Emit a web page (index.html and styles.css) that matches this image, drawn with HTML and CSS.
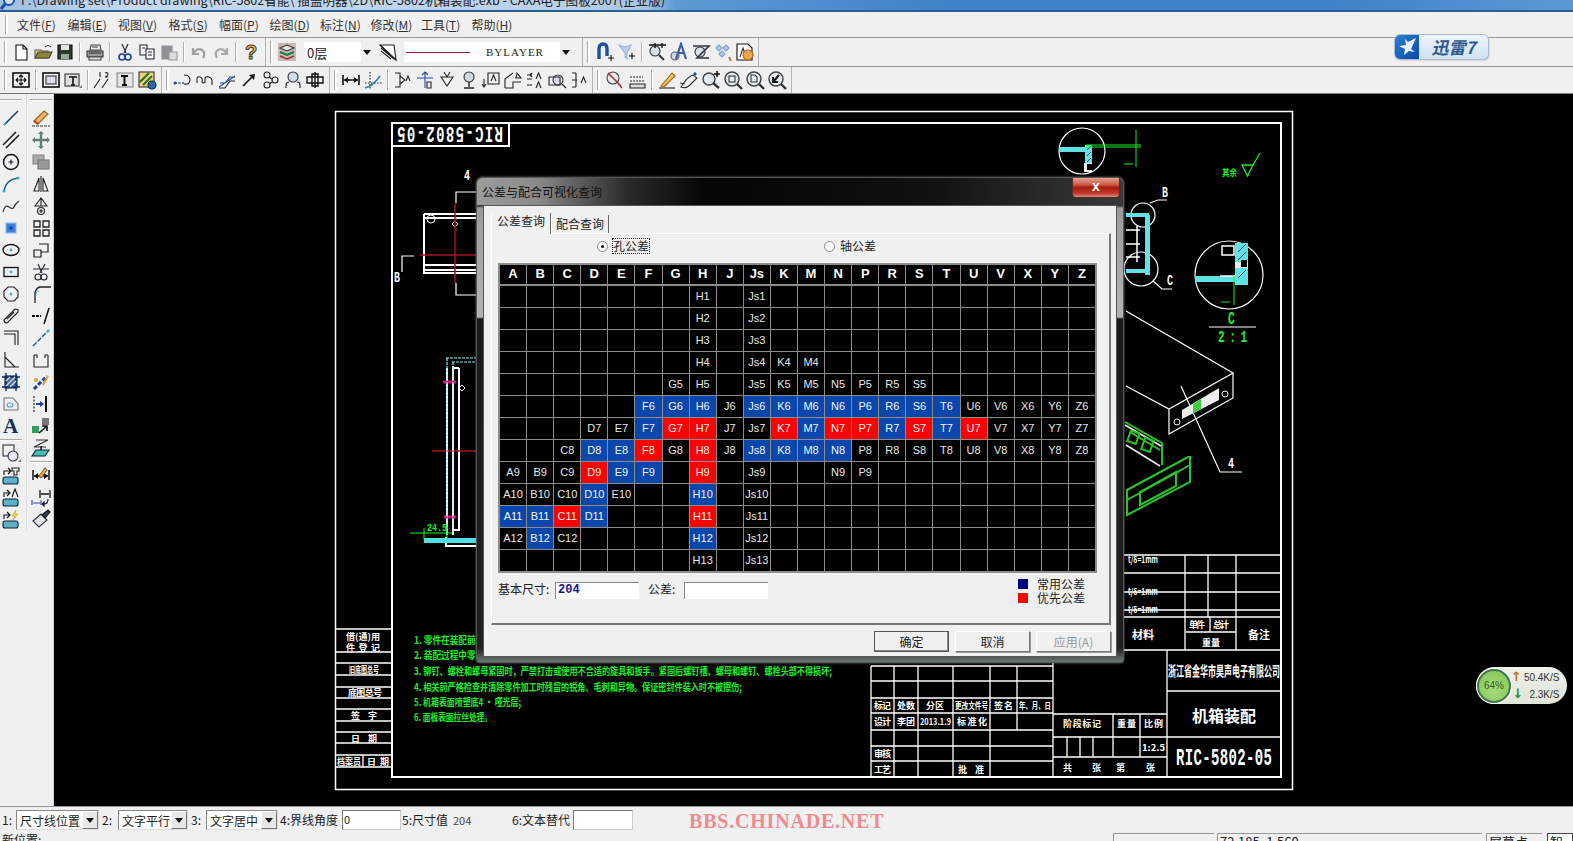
FILE: index.html
```html
<!DOCTYPE html>
<html lang="zh">
<head>
<meta charset="utf-8">
<title>CAXA电子图板2007</title>
<link rel="stylesheet" href="styles.css">
</head>
<body>
<div class="app">
  <div class="titlebar">
    <svg class="app-icon" viewBox="0 0 16 16"><circle cx="9" cy="5" r="5" fill="#cfe0f5" stroke="#1c4fa0" stroke-width="2"/><path d="M5 9L1 14" stroke="#1c4fa0" stroke-width="3"/></svg>
    <span class="title-text">F:\Drawing set\Product drawing\RIC-5802省能\ 插盖明器\2D\RIC-5802机箱装配.exb - CAXA电子图板2007(企业版)</span>
  </div>
  <div class="menubar">
    <span class="grip"></span>
    <span class="menu">文件(<u>F</u>)</span><span class="menu">编辑(<u>E</u>)</span><span class="menu">视图(<u>V</u>)</span><span class="menu">格式(<u>S</u>)</span><span class="menu">幅面(<u>P</u>)</span><span class="menu">绘图(<u>D</u>)</span><span class="menu">标注(<u>N</u>)</span><span class="menu">修改(<u>M</u>)</span><span class="menu">工具(<u>T</u>)</span><span class="menu">帮助(<u>H</u>)</span>
  </div>

  <div class="tb-row tb-row-1">
    <div class="tb-group g-std">
      <span class="grip"></span>
      <span class="btn"><svg class="ic" viewBox="0 0 20 20"><path d="M5 3h7l4 4v11H5z" fill="#fff" stroke="#111"/><path d="M12 3v4h4" stroke="#111"/></svg></span>
      <span class="btn"><svg class="ic" viewBox="0 0 20 20"><path d="M2 8h6l1 1h6v7H2z" fill="#e8dc8c" stroke="#555"/><path d="M2 16l3-6h14l-3 6z" fill="#8d8434" stroke="#444"/><path d="M12 5q3-3 6 0" stroke="#333"/></svg></span>
      <span class="btn"><svg class="ic" viewBox="0 0 20 20"><path d="M3 3h14v14H3z" fill="#2e3a2e" stroke="#111"/><path d="M6 3h8v5H6z" fill="#dfe5df" stroke="none"/><path d="M6 12h8v5H6z" fill="#9aa79a" stroke="none"/></svg></span>
      <span class="sep"></span>
      <span class="btn"><svg class="ic" viewBox="0 0 20 20"><path d="M6 3h9l1 5H5z" fill="#eee" stroke="#444"/><path d="M2 9h16v6H2z" fill="#999" stroke="#333"/><path d="M4 15h12v3H4z" fill="#ddd" stroke="#444"/><path d="M7 5h6M4 11h12" stroke="#333"/></svg></span>
      <span class="sep"></span>
      <span class="btn"><svg class="ic" viewBox="0 0 20 20"><path d="M7 2l4 9M13 2l-4 9" stroke="#223"/><circle cx="7" cy="15" r="3" stroke="#1c3fa0" stroke-width="1.6"/><circle cx="13" cy="15" r="3" stroke="#1c3fa0" stroke-width="1.6"/></svg></span>
      <span class="btn"><svg class="ic" viewBox="0 0 20 20"><path d="M3 3h7v10H3z" fill="#fff" stroke="#223"/><path d="M9 7h8v10H9z" fill="#fff" stroke="#223"/><path d="M11 10h4M11 13h4M5 6h3" stroke="#223"/></svg></span>
      <span class="btn"><svg class="ic" viewBox="0 0 20 20"><path d="M3 4h10v13H3z" fill="#8f9297" stroke="#8f9297"/><path d="M10 10h8v8h-8z" fill="#dcdcdc" stroke="#9a9a9a"/></svg></span>
      <span class="sep"></span>
      <span class="btn"><svg class="ic" viewBox="0 0 20 20"><path d="M4 6v6h6M4 12q4-7 9-4 4 3 1 8" stroke="#a0a0a0" stroke-width="2.2"/></svg></span>
      <span class="btn"><svg class="ic" viewBox="0 0 20 20"><path d="M16 6v6h-6M16 12q-4-7-9-4-4 3-1 8" stroke="#a8a8a8" stroke-width="2.2"/></svg></span>
      <span class="sep"></span>
      <span class="btn"><span class="help-mark">?</span></span>
    </div>
    <div class="tb-group g-layer">
      <span class="grip"></span>
      <span class="btn"><svg class="ic" viewBox="0 0 20 20"><rect x="1" y="1" width="18" height="18" fill="#c9b8b6" stroke="none"/><path d="M3 6l7-3 7 3-7 3z" fill="#e8e8d8" stroke="#333"/><path d="M3 10l7 3 7-3" stroke="#157f3d" stroke-width="2"/><path d="M3 14l7 3 7-3" stroke="#a03030" stroke-width="1.6"/></svg></span>
      <span class="combo combo-layer"><span class="combo-text">0层</span><span class="combo-arrow"></span></span>
      <span class="btn"><svg class="ic" viewBox="0 0 20 20"><path d="M2 3h14l2 15z" fill="#fff" stroke="#222"/><path d="M3 6l13 11M3 9l10 8M2 3l16 15" stroke="#222"/></svg></span>
      <span class="combo combo-line"><span class="red-line"></span><span class="combo-serif">BYLAYER</span><span class="combo-arrow"></span></span>
    </div>
    <div class="tb-group g-snap">
      <span class="grip grip-wide"></span>
      <span class="btn"><svg class="ic" viewBox="0 0 20 20"><path d="M4 17V7q0-5 4-5t4 5v7" stroke="#1f4f9f" stroke-width="3.4"/><path d="M16 13v6M13 16h6" stroke="#111"/></svg></span>
      <span class="btn"><svg class="ic" viewBox="0 0 20 20"><path d="M2 3l6 2 6-2-4 8v6l-2-2v-4z" fill="#bcd0ea" stroke="#9cb4d6"/><path d="M15 11v6M12 14h6" stroke="#111"/></svg></span>
      <span class="sep"></span>
      <span class="btn"><svg class="ic" viewBox="0 0 20 20"><circle cx="8" cy="9" r="5" fill="#d9e2e8" stroke="#333"/><path d="M12 13l5 5" stroke="#333" stroke-width="2"/><path d="M2 3h17M8 1v5M15 1v5" stroke="#111" stroke-width="1.4"/></svg></span>
      <span class="btn"><svg class="ic" viewBox="0 0 20 20"><circle cx="6" cy="14" r="4" fill="#cfd8df" stroke="#556"/><path d="M7 17L12 2l5 15M9 11h6" stroke="#3a5fa8" stroke-width="2.2"/></svg></span>
      <span class="btn"><svg class="ic" viewBox="0 0 20 20"><circle cx="9" cy="10" r="5" fill="#d9e2e8" stroke="#333"/><path d="M2 4h16L6 16h12" stroke="#334" stroke-width="1.6"/></svg></span>
      <span class="btn"><svg class="ic" viewBox="0 0 20 20"><path d="M3 6l3-3 3 3-3 3zM10 6l3-3 3 3-3 3zM6 12l3-3 3 3-3 3z" fill="#b9cde8" stroke="#7f9cc8"/><path d="M16 15l2 4" stroke="#c97a30" stroke-width="2"/></svg></span>
      <span class="btn"><svg class="ic" viewBox="0 0 20 20"><path d="M2 2h11l4 4v12H2z" fill="#fff" stroke="#111"/><path d="M5 15l3-9 3 9" stroke="#333"/><circle cx="13" cy="13" r="5" fill="#f1a24c" stroke="#a8621c"/></svg></span>
    </div>
  </div>

  <div class="tb-row tb-row-2">
    <div class="tb-group g-view">
      <span class="grip"></span>
      <span class="btn"><svg class="ic" viewBox="0 0 20 20"><rect x="2" y="3" width="16" height="14" fill="#f4f4f4" stroke="#111" stroke-width="1.6"/><path d="M10 5v10M5 10h10M8 7l2-2 2 2M8 13l2 2 2-2M7 8l-2 2 2 2M13 8l2 2-2 2" stroke="#111"/></svg></span>
      <span class="sep"></span>
      <span class="btn"><svg class="ic" viewBox="0 0 20 20"><rect x="2" y="3" width="16" height="14" stroke="#111" stroke-width="1.6"/><rect x="5" y="6" width="10" height="8" fill="#dde" stroke="#333"/></svg></span>
      <span class="btn"><svg class="ic" viewBox="0 0 20 20"><rect x="2" y="4" width="14" height="12" fill="#ddd" stroke="#333"/><path d="M6 7h8M10 7v8M8 15h4" stroke="#111" stroke-width="1.6"/><path d="M16 18h3v-3z" fill="#777" stroke="none"/></svg></span>
      <span class="sep"></span>
      <span class="btn"><svg class="ic" viewBox="0 0 20 20"><path d="M1 18L7 9M9 18l6-9M7 7V2M12 3q3-1 3 1t-3 3h3" stroke="#222"/></svg></span>
      <span class="btn"><svg class="ic" viewBox="0 0 20 20"><rect x="2" y="3" width="16" height="14" fill="#e4e4e4" stroke="#888"/><path d="M6 6h7M9.500 6v9M7 15h5" stroke="#111" stroke-width="2"/></svg></span>
      <span class="btn"><svg class="ic" viewBox="0 0 20 20"><rect x="2" y="2" width="15" height="15" fill="#e8d47a" stroke="#333"/><path d="M3 12L12 3M6 15l9-9" stroke="#2f6a2f" stroke-width="2"/><circle cx="15" cy="15" r="4" fill="#2c67b0" stroke="#123"/></svg></span>
    </div>
    <div class="tb-group g-curve">
      <span class="grip"></span>
      <span class="btn"><svg class="ic" viewBox="0 0 20 20"><path d="M2 13h10" stroke="#1c4fa0" stroke-dasharray="2 1.500" stroke-width="1.6"/><path d="M11 5q6 0 6 5t-6 4" stroke="#222"/><circle cx="2" cy="13" r="1.500" fill="#1c4fa0" stroke="none"/></svg></span>
      <span class="btn"><svg class="ic" viewBox="0 0 20 20"><path d="M2 13V9q0-3 3-2t2 5q1 2 3 0V8q1-2 4-1t3 4v4" stroke="#222"/></svg></span>
      <span class="btn"><svg class="ic" viewBox="0 0 20 20"><path d="M2 17l16-11M3 13h5l5-6h5" stroke="#1c4fa0"/><path d="M2 18h6l5-7h5" stroke="#222"/></svg></span>
      <span class="btn"><svg class="ic" viewBox="0 0 20 20"><path d="M4 16L14 6" stroke="#111" stroke-width="1.6"/><path d="M16 4l-6 1 5 5z" fill="#111" stroke="none"/></svg></span>
      <span class="btn"><svg class="ic" viewBox="0 0 20 20"><circle cx="6" cy="5" r="3" stroke="#222"/><circle cx="14" cy="10" r="3" stroke="#222"/><circle cx="6" cy="15" r="3" stroke="#222"/><path d="M8 7l3 2M8 14l3-2" stroke="#222"/></svg></span>
      <span class="btn"><svg class="ic" viewBox="0 0 20 20"><circle cx="10" cy="7" r="5" fill="#cfe0e8" stroke="#334"/><path d="M3 18v-3q0-3 3-3M17 18v-3q0-3-3-3" stroke="#222"/></svg></span>
      <span class="btn"><svg class="ic" viewBox="0 0 20 20"><path d="M7 4h6v12H7zM2 7h16v6H2zM10 2v16" stroke="#111" stroke-width="1.4"/></svg></span>
    </div>
    <div class="tb-group g-dim">
      <span class="grip"></span>
      <span class="btn"><svg class="ic" viewBox="0 0 20 20"><path d="M2 5v10M18 5v10M3 10h14" stroke="#111" stroke-width="1.6"/><path d="M3 10l4-3v6zM17 10l-4-3v6z" fill="#111" stroke="none"/></svg></span>
      <span class="btn"><svg class="ic" viewBox="0 0 20 20"><path d="M2 18q8-2 15-12" stroke="#1c7fb0" stroke-width="1.4"/><path d="M7 2v17M2 13h17" stroke="#222" stroke-dasharray="1.500 1.500"/></svg></span>
      <span class="sep"></span>
      <span class="btn"><svg class="ic" viewBox="0 0 20 20"><path d="M2 3h5v14H2M7 6l5 4-5 4" stroke="#222"/><path d="M13 11l2-5 2 5" stroke="#222"/></svg></span>
      <span class="btn"><svg class="ic" viewBox="0 0 20 20"><path d="M2 8h16M10 2v16M7 5l3-3 3 3" stroke="#1c4fa0"/><path d="M12 12h4v6h-4z" stroke="#222"/></svg></span>
      <span class="btn"><svg class="ic" viewBox="0 0 20 20"><path d="M4 7h12l-6 9zM7 2l3 5 3-5" stroke="#222"/></svg></span>
      <span class="btn"><svg class="ic" viewBox="0 0 20 20"><circle cx="10" cy="7" r="5" fill="#cfd9df" stroke="#333"/><path d="M10 12v5M5 18h10" stroke="#222" stroke-width="1.4"/></svg></span>
      <span class="btn"><svg class="ic" viewBox="0 0 20 20"><path d="M7 3h11v11H7zM3 9v8M1 14l2 3 2-3" stroke="#222"/><path d="M10 11l2.500-6 2.500 6" stroke="#222"/></svg></span>
      <span class="btn"><svg class="ic" viewBox="0 0 20 20"><path d="M2 18V9l8-6M2 18h8v-6h8M14 3l4 5h-5z" stroke="#222"/></svg></span>
      <span class="btn"><svg class="ic" viewBox="0 0 20 20"><path d="M2 5h5M2 9h5M2 15h5M7 3l-2 2 2 2" stroke="#222"/><path d="M11 9l2.500-6 2.500 6M11 18l2.500-6 2.500 6" stroke="#222"/></svg></span>
      <span class="btn"><svg class="ic" viewBox="0 0 20 20"><circle cx="11" cy="10" r="5" fill="#dde" stroke="#333"/><path d="M2 7h11v8H2zM15 14l4 4" stroke="#222"/></svg></span>
      <span class="btn"><svg class="ic" viewBox="0 0 20 20"><path d="M3 3h4M7 3v14M3 17h4M3 10h5M12 13l2.500-6 2.500 6" stroke="#222"/></svg></span>
    </div>
    <div class="tb-group g-zoom">
      <span class="grip grip-wide"></span>
      <span class="btn"><svg class="ic" viewBox="0 0 20 20"><circle cx="8" cy="8" r="6" fill="#e4ecef" stroke="#444"/><path d="M3 3l13 13M12 12l5 6" stroke="#a33" stroke-width="1.500"/></svg></span>
      <span class="btn"><svg class="ic" viewBox="0 0 20 20"><path d="M3 7h13M3 11h15M3 16h15" stroke="#222" stroke-dasharray="2 1"/><path d="M3 14h15v4H3z" fill="#ddd" stroke="#222"/></svg></span>
      <span class="sep"></span>
      <span class="btn"><svg class="ic" viewBox="0 0 20 20"><path d="M2 18h16" stroke="#222"/><path d="M4 16L15 3l3 3L7 17z" fill="#f1c05a" stroke="#9a6a18"/></svg></span>
      <span class="btn"><svg class="ic" viewBox="0 0 20 20"><path d="M2 17q6-10 12-12l4 3-7 7q-4 4-9 2zM1 13l5 1" fill="#f2f2f2" stroke="#333"/><path d="M16 2l2 2-2 2-2-2z" fill="#1c4fa0" stroke="none"/></svg></span>
      <span class="btn"><svg class="ic" viewBox="0 0 20 20"><circle cx="8" cy="9" r="6" fill="#e3ecf0" stroke="#444" stroke-width="1.500"/><path d="M12 13l6 5" stroke="#333" stroke-width="2.400"/><path d="M13 4h6M16 1v6" stroke="#111" stroke-width="1.600"/></svg></span>
      <span class="btn"><svg class="ic" viewBox="0 0 20 20"><circle cx="9" cy="9" r="7" fill="#e3ecf0" stroke="#444" stroke-width="1.500"/><path d="M14 14l5 5" stroke="#333" stroke-width="2.400"/><rect x="6" y="6" width="6" height="6" stroke="#333"/></svg></span>
      <span class="btn"><svg class="ic" viewBox="0 0 20 20"><circle cx="9" cy="9" r="7" fill="#e3ecf0" stroke="#444" stroke-width="1.500"/><path d="M14 14l5 5" stroke="#333" stroke-width="2.400"/><path d="M6 5h4l2 2v5H6z" stroke="#333"/></svg></span>
      <span class="btn"><svg class="ic" viewBox="0 0 20 20"><circle cx="9" cy="9" r="7" fill="#e3ecf0" stroke="#444" stroke-width="1.500"/><path d="M14 14l5 5" stroke="#333" stroke-width="2.400"/><path d="M12 5l-6 7M6 7v5h5" stroke="#111" stroke-width="2"/></svg></span>
    </div>
  </div>

  <div class="main">
    <aside class="side">
      <div class="side-col side-col-a">
        <span class="side-grip"></span>
        <span class="sbtn"><svg class="ic" viewBox="0 0 20 20"><path d="M3 17L17 3" stroke="#1c3f5f" stroke-width="1.600"/><path d="M3 17l2-2" stroke="#3ab0d0" stroke-width="2.400"/></svg></span>
        <span class="sbtn"><svg class="ic" viewBox="0 0 20 20"><path d="M2 15L15 2M5 18L18 5" stroke="#222" stroke-width="1.600"/></svg></span>
        <span class="sbtn"><svg class="ic" viewBox="0 0 20 20"><circle cx="10" cy="10" r="7.500" stroke="#111" stroke-width="1.400"/><path d="M7.500 10h5M10 7.500v5" stroke="#123" stroke-width="1.200"/></svg></span>
        <span class="sbtn"><svg class="ic" viewBox="0 0 20 20"><path d="M3 18Q4 6 17 4" stroke="#1f5f7f" stroke-width="1.500"/><circle cx="3" cy="17" r="1.600" fill="#3ab0d0" stroke="none"/><circle cx="17" cy="4" r="1.600" fill="#3ab0d0" stroke="none"/></svg></span>
        <span class="sbtn"><svg class="ic" viewBox="0 0 20 20"><path d="M2 16q2-8 6-5t5 0 5-6" stroke="#333" stroke-width="1.200"/></svg></span>
        <span class="sbtn"><svg class="ic" viewBox="0 0 20 20"><rect x="5" y="5" width="10" height="10" fill="#3b7fd8" stroke="#8fbdf0"/><path d="M10 8l2 2-2 2-2-2z" fill="#0c3f98" stroke="none"/></svg></span>
        <span class="sbtn"><svg class="ic" viewBox="0 0 20 20"><ellipse cx="10" cy="10" rx="8" ry="5.500" stroke="#111" stroke-width="1.300"/><circle cx="10" cy="10" r="1.400" fill="#4fa8d8" stroke="none"/></svg></span>
        <span class="sbtn"><svg class="ic" viewBox="0 0 20 20"><rect x="3" y="5.500" width="14" height="9" stroke="#111" stroke-width="1.300"/><circle cx="10" cy="10" r="1.400" fill="#4fa8d8" stroke="none"/></svg></span>
        <span class="sbtn"><svg class="ic" viewBox="0 0 20 20"><path d="M7 3h6l4 4v6l-4 4H7l-4-4V7z" stroke="#223"/><circle cx="10" cy="10" r="1.400" fill="#4fa8d8" stroke="none"/></svg></span>
        <span class="sbtn"><svg class="ic" viewBox="0 0 20 20"><path d="M3 14L14 3q4 0 3 3L6 17q-3 0-3-3zM6 13L13 6" stroke="#222"/></svg></span>
        <span class="sbtn"><svg class="ic" viewBox="0 0 20 20"><path d="M3 3h14v14M3 6h11v11" stroke="#222"/></svg></span>
        <span class="sbtn"><svg class="ic" viewBox="0 0 20 20"><path d="M4 2v15h14M4 7l10 10" stroke="#222"/></svg></span>
        <span class="sbtn"><svg class="ic" viewBox="0 0 20 20"><rect x="4" y="4" width="12" height="12" fill="#4a6f8f" stroke="#123"/><path d="M1 5h18M1 15h18M5 1v18M15 1v18" stroke="#0c2f5f" stroke-width="1.400"/><path d="M5 9l4-4M5 14l9-9M9 15l6-6" stroke="#dde"/></svg></span>
        <span class="sbtn"><svg class="ic" viewBox="0 0 20 20"><path d="M3 4h9l5 6v6H3z" stroke="#777"/><ellipse cx="9" cy="11" rx="3" ry="2" stroke="#4fa8d8"/></svg></span>
        <span class="sbtn"><span class="a-mark">A</span></span>
        <span class="side-sep"></span>
        <span class="sbtn"><svg class="ic" viewBox="0 0 20 20"><rect x="2" y="2" width="11" height="11" stroke="#333"/><circle cx="12" cy="13" r="5" fill="#e8eef4" stroke="#334"/><path d="M17 19h3v-3z" fill="#777" stroke="none"/></svg></span>
        <span class="sbtn"><svg class="ic" viewBox="0 0 20 20"><rect x="2" y="12" width="15" height="7" rx="2" fill="#5fb0c8" stroke="#123"/><path d="M3 10V6h6M7 3l3 3-3 3" stroke="#111"/><path d="M11 3h7v3h-2v4h-3V6h-2z" stroke="#222"/></svg></span>
        <span class="sbtn"><svg class="ic" viewBox="0 0 20 20"><rect x="2" y="12" width="15" height="7" rx="2" fill="#5fb0c8" stroke="#123"/><path d="M3 10V6h5M6 3l3 3-3 3M11 10l3-8 3 8" stroke="#111"/></svg></span>
        <span class="sbtn"><svg class="ic" viewBox="0 0 20 20"><rect x="2" y="12" width="15" height="7" rx="2" fill="#5fb0c8" stroke="#123"/><path d="M3 10V6h5M6 3l3 3-3 3" stroke="#111"/><path d="M15 1l-4 6h3l-2 4 5-6h-3z" fill="#f2e040" stroke="#b8a010" stroke-width=".6"/></svg></span>
      </div>
      <div class="side-col">
        <span class="side-grip"></span>
        <span class="sbtn"><svg class="ic" viewBox="0 0 20 20"><path d="M3 13L13 3l4 3L7 16z" fill="#ecb45e" stroke="#8a6a20"/><path d="M3 13l4 3" stroke="#c03030" stroke-width="2"/><path d="M1 18h18" stroke="#333" stroke-dasharray="3 1"/></svg></span>
        <span class="sbtn"><svg class="ic" viewBox="0 0 20 20"><path d="M10 2v16M2 10h16" stroke="#5f7f77" stroke-width="2.400"/><path d="M10 1l3 3H7zM10 19l3-3H7zM1 10l3-3v6zM19 10l-3-3v6z" fill="#5f7f77" stroke="none"/></svg></span>
        <span class="sbtn"><svg class="ic" viewBox="0 0 20 20"><rect x="2" y="3" width="11" height="9" fill="#aaa" stroke="#888"/><rect x="7" y="8" width="11" height="9" fill="#999" stroke="#777"/></svg></span>
        <span class="sbtn"><svg class="ic" viewBox="0 0 20 20"><path d="M8 4v13H3zM12 4v13h5zM10 2v16" stroke="#222"/></svg></span>
        <span class="sbtn"><svg class="ic" viewBox="0 0 20 20"><path d="M10 2l-6 8h12zM10 2v8" stroke="#222"/><circle cx="10" cy="15" r="3.500" stroke="#222"/><path d="M10 13v4M8 15h4" stroke="#222"/></svg></span>
        <span class="sbtn"><svg class="ic" viewBox="0 0 20 20"><path d="M3 3h6v6H3zM12 3h6v6h-6zM3 12h6v6H3zM12 12h6v6h-6z" stroke="#222" stroke-width="1.300"/></svg></span>
        <span class="sbtn"><svg class="ic" viewBox="0 0 20 20"><path d="M3 10h7v7H3zM8 4h9v8h-7" stroke="#222" stroke-width="1.200"/></svg></span>
        <span class="sbtn"><svg class="ic" viewBox="0 0 20 20"><path d="M7 2l4 9M14 2l-5 9M2 7h16" stroke="#223"/><circle cx="7" cy="15" r="3" stroke="#223"/><circle cx="13" cy="15" r="3" stroke="#223"/></svg></span>
        <span class="sbtn"><svg class="ic" viewBox="0 0 20 20"><path d="M4 19V8M8 3h12M4 9Q5 4 9 3" stroke="#222" stroke-width="1.300"/><path d="M8 7q-3 1-3 5" stroke="#4fa8d8" stroke-dasharray="1.500 1"/></svg></span>
        <span class="sbtn"><svg class="ic" viewBox="0 0 20 20"><path d="M1 10h9" stroke="#111" stroke-width="2" stroke-dasharray="3 1"/><path d="M13 18L18 2" stroke="#111" stroke-width="1.500"/></svg></span>
        <span class="sbtn"><svg class="ic" viewBox="0 0 20 20"><path d="M2 18L18 2" stroke="#1c5f7f" stroke-width="1.400" stroke-dasharray="5 1.500"/><circle cx="17" cy="3" r="1.500" fill="#3ab0d0" stroke="none"/></svg></span>
        <span class="sbtn"><svg class="ic" viewBox="0 0 20 20"><path d="M3 5v12h14V5M3 5h3v3M17 5h-3v3" stroke="#222"/></svg></span>
        <span class="sbtn"><svg class="ic" viewBox="0 0 20 20"><path d="M3 17L16 4" stroke="#1c3f9f" stroke-width="3" stroke-dasharray="4 2"/><path d="M12 13l5-9" stroke="#e8a030" stroke-width="2"/><circle cx="5" cy="8" r="2" fill="#e8a030" stroke="none"/></svg></span>
        <span class="sbtn"><svg class="ic" viewBox="0 0 20 20"><path d="M3 2v16" stroke="#111" stroke-dasharray="2 1.500"/><path d="M15 2v16" stroke="#111" stroke-width="2"/><path d="M5 10h7" stroke="#1c3fa0" stroke-width="2"/><path d="M13 10l-4-3v6z" fill="#1c3fa0" stroke="none"/></svg></span>
        <span class="sbtn"><svg class="ic" viewBox="0 0 20 20"><rect x="1" y="10" width="7" height="7" fill="#2f9f5f" stroke="none"/><rect x="11" y="2" width="7" height="7" fill="#777" stroke="none"/><path d="M8 17l8-7M11 10h5v5" stroke="#111" stroke-width="1.600"/></svg></span>
        <span class="sbtn"><svg class="ic" viewBox="0 0 20 20"><path d="M5 2h12L3 9h12" stroke="#333"/><path d="M5 12h13l-4 6H1z" fill="#3fc0b8" stroke="#123"/><path d="M10 8v4" stroke="#111" stroke-width="1.500"/></svg></span>
        <span class="side-sep"></span>
        <span class="sbtn"><svg class="ic" viewBox="0 0 20 20"><path d="M2 5v10M18 5v10M3 11h14" stroke="#111" stroke-width="1.500"/><path d="M3 11l4-3v6zM17 11l-4-3v6z" fill="#111" stroke="none"/><path d="M8 11l6-8 2 2-6 8z" fill="#ecb45e" stroke="#8a6a20"/></svg></span>
        <span class="sbtn"><svg class="ic" viewBox="0 0 20 20"><path d="M9 3v8M19 3v8M10 7h8" stroke="#111" stroke-width="1.300"/><path d="M1 13v5M10 13v5M2 16h7" stroke="#1c4fa0"/><path d="M17 12q0 5-4 5M13 15v4l-2-2z" stroke="#111"/></svg></span>
        <span class="sbtn"><svg class="ic" viewBox="0 0 20 20"><path d="M2 12L10 5l6 6-8 7z" fill="#dfe3e8" stroke="#333"/><path d="M11 6l6-5 2 2-5 6z" fill="#33405a" stroke="#111"/></svg></span>
      </div>
    </aside>

    <div class="canvas">
      <svg class="drawing" viewBox="54 94 1519 712" width="1519" height="712">
        <g class="w" stroke-width="1.500">
          <rect x="335.500" y="111.500" width="957" height="678"/>
        </g>
        <g class="w" stroke-width="2">
          <path d="M392 123H1281V777H392zM392 146H509V123"/>
          <path d="M424 214H476M424 218H476M424 214V273H476M424 265H476M424 270H476"/>
          <path d="M447 368V535M453 366V535M459 368V530H452M453 368H459"/>
          <path d="M446 537V546H476"/>
        </g>
        <g class="w" stroke-width="1.200">
          <path d="M456 203V192H476M456 283V295H476M402 272V256H414"/>
        </g>
        <g class="w" stroke-width="1">
          <circle cx="431" cy="219" r="4"/>
          <path d="M452 224l3-3 3 3-3 3z"/>
          <path d="M459 388l3-3 3 3-3 3z"/>
        </g>
        <path d="M420 255H476M455 203V283M432 451H476" stroke="#a01525" stroke-width="1.500" fill="none"/>
        <path d="M443 382H456M444 517H456" stroke="#e0107a" stroke-width="3" fill="none"/>
        <path d="M446 358H476M452 362H476M447 358V535M453 362V535" stroke="#8fe8e8" stroke-width="1.200" fill="none" stroke-dasharray="3 1"/>
        <rect x="424" y="538" width="52" height="5" fill="#4fe0e8"/>
        <path d="M410 533H452M424 528V540M447 525V540" stroke="#1aee22" fill="none"/>
        <text class="gtxt" transform="translate(427 531) scale(1 1.400)" textLength="20" lengthAdjust="spacingAndGlyphs">24.5</text>
        <text class="wtxt wtxt-sm" transform="translate(394 282) scale(1 1.500)">B</text>
        <text class="wtxt wtxt-sm" transform="translate(464 180) scale(1 1.500)">4</text>
        <text class="wtxt wtxt-tall" transform="translate(503 127) rotate(180) scale(1 1.600)" textLength="106" lengthAdjust="spacing">RIC-5802-05</text>

        <g class="w" stroke-width="1.200">
          <circle cx="1082" cy="151" r="23"/>
          <circle cx="1143" cy="215" r="12"/>
          <circle cx="1141" cy="269" r="17"/>
          <circle cx="1229" cy="275" r="34"/>
          <path d="M1150 203L1158 200H1167M1153 281L1162 289H1172"/>
          <path d="M1126 311L1233 373L1169 409L1126 386M1233 373V398L1169 434V409"/>
          <path d="M1181 386L1220 472H1242"/>
        </g>
        <path d="M1059 147H1086V152H1059zM1085 145H1092V163H1085zM1126 213H1149V217H1126zM1145 215H1150V275H1145zM1126 269H1146V273H1126zM1235 243H1248V262H1235zM1235 268H1248V285H1235zM1195 276H1240V282H1195z" fill="#63e2e6"/>
        <path d="M1087 150L1091 146M1087 156L1091 152M1087 162L1091 158M1238 252L1246 244M1238 260L1246 252M1238 278L1246 270" stroke="#157" stroke-width="1" fill="none"/>
        <path d="M1084 163H1092V172H1084zM1235 262H1248V268H1235z" fill="#eee"/>
        <rect x="1087" y="164" width="6" height="6" fill="#000"/>
        <rect x="1241" y="260" width="6" height="7" fill="#000"/>
        <g class="w" stroke-width="1.500">
          <path d="M1222 246H1234V255H1222zM1220 276H1235"/>
          <path d="M1126 230H1140M1126 244H1140M1126 257H1140M1137 226V262"/>
        </g>
        <path d="M1086 145H1141M1086 147H1141M1136 130V167M1124 164H1133M1234 275V305M1221 302H1230" stroke="#1aee22" fill="none"/>
        <path d="M1242 165H1253L1247.500 176zM1253 165L1260 153" stroke="#1aee22" stroke-width="1.300" fill="none"/>
        <path d="M1209 327H1256" stroke="#fff" fill="none"/>
        <text class="gtxt gtxt-tall" transform="translate(1228 324) scale(1 1.600)">C</text>
        <text class="gtxt gtxt-tall" transform="translate(1218 342) scale(1 1.500)" textLength="29" lengthAdjust="spacing">2 : 1</text>
        <text class="gtxt gtxt-cn" x="1222" y="176" textLength="15" lengthAdjust="spacingAndGlyphs">其余</text>
        <text class="wtxt wtxt-sm" transform="translate(1162 197) scale(1 1.500)">B</text>
        <text class="wtxt wtxt-sm" transform="translate(1167 285) scale(1 1.500)">C</text>
        <text class="wtxt wtxt-sm" transform="translate(1228 468) scale(1 1.500)">4</text>

        <path d="M1182 410L1219 388V400L1182 419z" fill="#eee"/>
        <path d="M1193 404L1201 399V409L1193 414z" fill="#3fce3f"/>
        <g class="w" stroke-width="1"><circle cx="1177" cy="422" r="3"/><circle cx="1225" cy="394" r="3"/></g>
        <path d="M1125 422L1162 443V465M1130 432L1160 450M1127 490L1188 457H1190V482L1127 515zM1140 492L1176 472V486L1140 505zM1127 500L1190 465" stroke="#2ac42a" stroke-width="2" fill="none"/>
        <path d="M1125 425L1161 446M1126 445L1160 466" stroke="#eee" stroke-width="1.500" fill="none"/>
        <rect x="1129" y="432" width="9" height="11" stroke="#2ac42a" stroke-width="2" fill="none" transform="rotate(20 1134 437)"/>
        <rect x="1143" y="439" width="9" height="12" stroke="#2ac42a" stroke-width="2" fill="none" transform="rotate(20 1148 445)"/>

        <g class="w" stroke-width="1.300">
          <path d="M1124 555H1281M1124 573H1281M1124 592H1281M1124 610H1281M1124 617H1281M1185 555V650M1208 555V617M1236 555V650M1186 632H1236M1210 617V632M1124 650H1281"/>
          <path d="M1167 650V777M1167 691H1281M1167 737H1281"/>
          <path d="M1053 650V777M1053 714H1167M1053 737H1167M1053 757H1167M1113 714V757M1140 714V757M1067 737V757M1080 737V757M1093 737V757"/>
          <path d="M871 666V777H1053M871 666H1053M871 681H1053M871 698H1053M871 713H1053M871 730H1053M871 746H1053M871 761H1053M894 666V777M918 666V777M953 666V777M990 666V777M1017 666V730"/>
          <path d="M335 629H392M335 652H392M335 663H392M335 675H392M335 687H392M335 698H392M335 709H392M335 721H392M335 732H392M335 743H392M335 755H392M335 767H392M363 755V767"/>
        </g>
        <g class="wtxt wtxt-block">
          <text x="1128" y="563" textLength="30" lengthAdjust="spacingAndGlyphs">t/δ=1mm</text><text x="1128" y="595" textLength="30" lengthAdjust="spacingAndGlyphs">t/δ=1mm</text><text x="1128" y="613" textLength="30" lengthAdjust="spacingAndGlyphs">t/δ=1mm</text>
          <text x="1189" y="628" textLength="16">单件</text><text x="1213" y="628" textLength="16">总计</text><text x="1202" y="646" textLength="18">重量</text>
        </g>
        <text class="wtxt wtxt-mid" x="1132" y="639" textLength="22">材料</text>
        <text class="wtxt wtxt-mid" x="1248" y="639" textLength="22">备注</text>
        <text class="wtxt wtxt-co" x="1168" y="676" textLength="112" lengthAdjust="spacingAndGlyphs">浙江省金华市昊声电子有限公司</text>
        <text class="wtxt wtxt-name" x="1192" y="722" textLength="64">机箱装配</text>
        <text class="wtxt wtxt-tall" transform="translate(1176 765) scale(1 1.700)" textLength="96" lengthAdjust="spacing">RIC-5802-05</text>
        <g class="wtxt wtxt-block">
          <text x="1063" y="727" textLength="38">阶段标记</text><text x="1117" y="727" textLength="19">重量</text><text x="1144" y="727" textLength="19">比例</text>
          <text x="1142" y="751" textLength="23" lengthAdjust="spacingAndGlyphs">1:2.5</text>
          <text x="1063" y="771">共</text><text x="1092" y="771">张</text><text x="1116" y="771">第</text><text x="1146" y="771">张</text>
          <text x="874" y="709" textLength="17">标记</text><text x="897" y="709" textLength="18">处数</text><text x="926" y="709" textLength="18">分区</text><text x="955" y="709" textLength="33" lengthAdjust="spacingAndGlyphs">更改文件号</text><text x="994" y="709" textLength="19">签名</text><text x="1019" y="709" textLength="32" lengthAdjust="spacingAndGlyphs">年、月、日</text>
          <text x="874" y="725" textLength="17">设计</text><text x="897" y="725" textLength="18">李团</text><text x="920" y="725" textLength="31" lengthAdjust="spacingAndGlyphs">2013.1.9</text><text x="957" y="725" textLength="30">标准化</text>
          <text x="874" y="757" textLength="17">审核</text><text x="874" y="773" textLength="17">工艺</text><text x="958" y="773" textLength="26">批准</text>
          <text x="346" y="640" textLength="34" lengthAdjust="spacingAndGlyphs">借(通)用</text><text x="346" y="651" textLength="34">件登记</text>
          <text x="349" y="673" textLength="30" lengthAdjust="spacingAndGlyphs">旧底图总号</text><text x="348" y="696" textLength="34">底图总号</text>
          <text x="351" y="719" textLength="26">签字</text><text x="351" y="742" textLength="26">日期</text>
          <text x="337" y="765" textLength="24" lengthAdjust="spacingAndGlyphs">档案员</text><text x="367" y="765" textLength="22">日期</text>
        </g>
        <g class="gtxt gtxt-note">
          <text x="414" y="644" textLength="122" lengthAdjust="spacingAndGlyphs">1. 零件在装配前必须清除干净，</text>
          <text x="414" y="659" textLength="122" lengthAdjust="spacingAndGlyphs">2. 装配过程中零件不允许磕碰、</text>
          <text x="414" y="675" textLength="418" lengthAdjust="spacingAndGlyphs">3. 铆钉、螺栓和螺母紧固时，严禁打击或使用不合适的旋具和扳手。紧固后螺钉槽、螺母和螺钉、螺栓头部不得损坏;</text>
          <text x="414" y="691" textLength="328" lengthAdjust="spacingAndGlyphs">4. 相关前严格检查并清除零件加工时残留的锐角、毛刺和异物。保证密封件装入时不被擦伤;</text>
          <text x="414" y="706" textLength="107" lengthAdjust="spacingAndGlyphs">5. 机箱表面喷塑底4 · 哑光层;</text>
          <text x="414" y="721" textLength="78" lengthAdjust="spacingAndGlyphs">6. 面板表面拉丝处理。</text>
        </g>
      </svg>

      <section class="dlg">
        <header class="dlg-title"><span>公差与配合可视化查询</span><span class="dlg-close">x</span></header>
        <div class="dlg-body">
          <div class="tabs"><span class="tab tab-on">公差查询</span><span class="tab">配合查询</span></div>
          <div class="panel">
            <div class="radios">
              <label class="radio radio-a"><i class="dot dot-on"></i><span class="focus">孔公差</span></label>
              <label class="radio radio-b"><i class="dot"></i><span>轴公差</span></label>
            </div>
            <div class="tol">
              <div class="tol-head"><span>A</span><span>B</span><span>C</span><span>D</span><span>E</span><span>F</span><span>G</span><span>H</span><span>J</span><span>Js</span><span>K</span><span>M</span><span>N</span><span>P</span><span>R</span><span>S</span><span>T</span><span>U</span><span>V</span><span>X</span><span>Y</span><span>Z</span></div>
              <div class="tol-body">
                <span></span><span></span><span></span><span></span><span></span><span></span><span></span><span>H1</span><span></span><span>Js1</span><span></span><span></span><span></span><span></span><span></span><span></span><span></span><span></span><span></span><span></span><span></span><span></span>
                <span></span><span></span><span></span><span></span><span></span><span></span><span></span><span>H2</span><span></span><span>Js2</span><span></span><span></span><span></span><span></span><span></span><span></span><span></span><span></span><span></span><span></span><span></span><span></span>
                <span></span><span></span><span></span><span></span><span></span><span></span><span></span><span>H3</span><span></span><span>Js3</span><span></span><span></span><span></span><span></span><span></span><span></span><span></span><span></span><span></span><span></span><span></span><span></span>
                <span></span><span></span><span></span><span></span><span></span><span></span><span></span><span>H4</span><span></span><span>Js4</span><span>K4</span><span>M4</span><span></span><span></span><span></span><span></span><span></span><span></span><span></span><span></span><span></span><span></span>
                <span></span><span></span><span></span><span></span><span></span><span></span><span>G5</span><span>H5</span><span></span><span>Js5</span><span>K5</span><span>M5</span><span>N5</span><span>P5</span><span>R5</span><span>S5</span><span></span><span></span><span></span><span></span><span></span><span></span>
                <span></span><span></span><span></span><span></span><span></span><span class="b">F6</span><span class="b">G6</span><span class="b">H6</span><span>J6</span><span class="b">Js6</span><span class="b">K6</span><span class="b">M6</span><span class="b">N6</span><span class="b">P6</span><span class="b">R6</span><span class="b">S6</span><span class="b">T6</span><span>U6</span><span>V6</span><span>X6</span><span>Y6</span><span>Z6</span>
                <span></span><span></span><span></span><span>D7</span><span>E7</span><span class="b">F7</span><span class="r">G7</span><span class="r">H7</span><span>J7</span><span>Js7</span><span class="r">K7</span><span class="b">M7</span><span class="r">N7</span><span class="r">P7</span><span class="b">R7</span><span class="r">S7</span><span class="b">T7</span><span class="r">U7</span><span>V7</span><span>X7</span><span>Y7</span><span>Z7</span>
                <span></span><span></span><span>C8</span><span class="b">D8</span><span class="b">E8</span><span class="r">F8</span><span>G8</span><span class="r">H8</span><span>J8</span><span class="b">Js8</span><span class="b">K8</span><span class="b">M8</span><span class="b">N8</span><span>P8</span><span>R8</span><span>S8</span><span>T8</span><span>U8</span><span>V8</span><span>X8</span><span>Y8</span><span>Z8</span>
                <span>A9</span><span>B9</span><span>C9</span><span class="r">D9</span><span class="b">E9</span><span class="b">F9</span><span></span><span class="r">H9</span><span></span><span>Js9</span><span></span><span></span><span>N9</span><span>P9</span><span></span><span></span><span></span><span></span><span></span><span></span><span></span><span></span>
                <span>A10</span><span>B10</span><span>C10</span><span class="b">D10</span><span>E10</span><span></span><span></span><span class="b">H10</span><span></span><span>Js10</span><span></span><span></span><span></span><span></span><span></span><span></span><span></span><span></span><span></span><span></span><span></span><span></span>
                <span class="b">A11</span><span class="b">B11</span><span class="r">C11</span><span class="b">D11</span><span></span><span></span><span></span><span class="r">H11</span><span></span><span>Js11</span><span></span><span></span><span></span><span></span><span></span><span></span><span></span><span></span><span></span><span></span><span></span><span></span>
                <span>A12</span><span class="b">B12</span><span>C12</span><span></span><span></span><span></span><span></span><span class="b">H12</span><span></span><span>Js12</span><span></span><span></span><span></span><span></span><span></span><span></span><span></span><span></span><span></span><span></span><span></span><span></span>
                <span></span><span></span><span></span><span></span><span></span><span></span><span></span><span>H13</span><span></span><span>Js13</span><span></span><span></span><span></span><span></span><span></span><span></span><span></span><span></span><span></span><span></span><span></span><span></span>
              </div>
            </div>
            <div class="dlg-foot">
              <span class="lbl lbl-a">基本尺寸:</span>
              <span class="field"><b>204</b></span>
              <span class="lbl lbl-b">公差:</span>
              <span class="field"></span>
              <div class="legend">
                <div class="legend-row"><i class="swatch swatch-b"></i><span>常用公差</span></div>
                <div class="legend-row"><i class="swatch swatch-r"></i><span>优先公差</span></div>
              </div>
            </div>
          </div>
          <div class="dlg-btns">
            <span class="push push-def">确定</span><span class="push">取消</span><span class="push push-off">应用(A)</span>
          </div>
        </div>
      </section>
    </div>
  </div>

  <div class="propbar">
    <span class="pl pl-1">1:</span>
    <span class="pcombo pc-1"><span>尺寸线位置</span><i class="pc-arrow"></i></span>
    <span class="pl pl-2">2:</span>
    <span class="pcombo pc-2"><span>文字平行</span><i class="pc-arrow"></i></span>
    <span class="pl pl-3">3:</span>
    <span class="pcombo pc-3"><span>文字居中</span><i class="pc-arrow"></i></span>
    <span class="pl pl-4">4:界线角度</span>
    <span class="pinput pi-4">0</span>
    <span class="pl pl-5">5:尺寸值</span>
    <span class="pval">204</span>
    <span class="pl pl-6">6:文本替代</span>
    <span class="pinput pi-6"></span>
  </div>
  <div class="statusbar">
    <span class="st-left">新位置:</span>
    <span class="st-box st-a"></span>
    <span class="st-box st-b">72.185, 1.560</span>
    <span class="st-box st-c">屏幕点</span>
    <span class="st-box st-d">智能</span>
  </div>

  <div class="xunlei">
    <span class="xl-mark"><svg viewBox="0 0 24 24" width="24" height="24"><path d="M21 3L13 7 10 4l1 6-7 1 6 3-1 6 5-4 6 1-4-3z" fill="#eef4fb"/></svg></span>
    <span class="xl-text">迅雷7</span>
  </div>
  <div class="netmeter">
    <span class="nm-dial">64%</span>
    <span class="nm-rates">
      <span class="nm-line"><i class="nm-up">↑</i>50.4K/S</span>
      <span class="nm-line"><i class="nm-down">↓</i>2.3K/S</span>
    </span>
  </div>
  <div class="watermark">BBS.CHINADE.NET</div>
</div>
</body>
</html>
```

FILE: styles.css
```css
* { box-sizing: border-box; }
html, body { margin: 0; padding: 0; height: 100%; overflow: hidden; }
body { font-family: "Noto Sans CJK SC", "Liberation Sans", sans-serif; font-size: 12px; color: #222; background: #f0f0f0; }
.app { position: relative; display: flex; flex-direction: column; width: 1573px; height: 841px; overflow: hidden; background: #f0f0f0; }

.titlebar { flex: 0 0 12px; display: flex; align-items: flex-start; overflow: hidden; padding-left: 0; background: linear-gradient(90deg, #9dbfe0 0, #c6d9ec 8%, #bcd3ea 30%, #b7d0e8 37%, #a5c5e3 41%, #5d9ad4 43%, #3f83c8 60%, #3f83c8 85%, #5a9ad4 100%); border-bottom: 2px solid #2a5f96; }
.app-icon { flex: none; width: 16px; height: 16px; margin-top: -5px; }
.title-text { margin: -9px 0 0 5px; font-size: 12.600px; line-height: 18px; white-space: nowrap; color: #222; }

.menubar { flex: 0 0 25px; display: flex; align-items: center; padding-left: 5px; }
.grip { flex: none; align-self: stretch; width: 10px; margin: 3px 0; position: relative; }
.grip::before { content: ""; display: block; width: 2px; height: 100%; margin-left: 4px; background: #fff; border-left: 1px solid #aaa; }
.menubar .grip { width: 6px; }
.menubar .grip::before { margin-left: 0; }
.menu { flex: none; width: 50.500px; padding: 0 0 0 6px; font-size: 12px; line-height: 16px; color: #333; white-space: nowrap; }
.menu u { text-decoration: underline; }

.tb-row { display: flex; border-top: 1px solid #999; }
.tb-row-1 { flex: 0 0 29px; }
.tb-row-2 { flex: 0 0 28px; border-bottom: 1px solid #777; }
.tb-group { display: flex; align-items: center; border-right: 1px solid #b4b4b4; }
.g-std { width: 266px; }
.g-layer { width: 317px; }
.g-snap { width: 176px; }
.g-view { width: 162px; }
.g-curve { width: 168px; }
.g-dim { width: 263px; }
.g-zoom { width: 199px; }
.grip-wide { width: 11px; }
.btn { flex: none; display: flex; align-items: center; justify-content: center; width: 22px; height: 22px; }
.sep { flex: none; width: 8px; height: 20px; position: relative; background: linear-gradient(90deg, transparent 3px, #b0b0b0 3px, #b0b0b0 4px, #fff 4px, #fff 5px, transparent 5px); }
.ic { display: block; width: 20px; height: 20px; fill: none; stroke: #222; stroke-width: 1.100; }
.help-mark { font-family: "Liberation Sans", sans-serif; font-weight: 700; font-size: 20px; line-height: 20px; color: #f4c93a; -webkit-text-stroke: 1px #333; }
.combo { flex: none; display: flex; align-items: center; height: 20px; background: #fff; position: relative; }
.combo-layer { width: 71px; margin: 0 2px 0 6px; padding-left: 3px; }
.combo-line { width: 170px; margin-left: 5px; padding-left: 2px; }
.combo-text { font-size: 13px; flex: 1; color: #222; }
.red-line { flex: none; width: 64px; height: 1px; background: #a01c2c; }
.combo-serif { flex: 1; padding-left: 16px; font-family: "Liberation Serif", serif; font-size: 11px; letter-spacing: 1px; color: #222; }
.combo-arrow { flex: none; width: 14px; height: 20px; margin-right: 0; background: #f0f0f0; position: relative; }
.combo-arrow::after { content: ""; position: absolute; left: 2px; top: 8px; border: 4px solid transparent; border-top: 5px solid #111; border-bottom: 0; }

.main { flex: 1 1 auto; min-height: 0; display: flex; }
.side { flex: 0 0 54px; display: flex; align-items: flex-start; border-right: 1px solid #ccc; }
.side-col { width: 27px; display: flex; flex-direction: column; align-items: center; padding-right: 4px; }
.side-col-a { padding-right: 5px; border-right: 1px solid #ddd; }
.side-col + .side-col { padding: 0 0 0 1px; width: 26px; }
.side-grip { flex: none; display: block; width: 22px; height: 13px; background: linear-gradient(#f0f0f0 5px, #aaa 5px, #aaa 6px, #fff 6px, #fff 7px, #f0f0f0 7px); }
.sbtn { flex: none; display: flex; align-items: center; justify-content: center; width: 22px; height: 22px; }
.side-sep { flex: none; width: 22px; height: 5px; background: linear-gradient(#f0f0f0 2px, #aaa 2px, #aaa 3px, #fff 3px, #fff 4px, #f0f0f0 4px); }
.a-mark { font-family: "Liberation Serif", serif; font-weight: 700; font-size: 21px; line-height: 22px; color: #12305f; }

.canvas { flex: 1 1 auto; position: relative; background: #000; overflow: hidden; }
.drawing { display: block; }
.w { fill: none; stroke: #fff; }
.wtxt { fill: #fff; font-family: "Noto Sans CJK SC", sans-serif; font-weight: 700; }
.wtxt-sm { font-family: "Liberation Mono", monospace; font-size: 10px; }
.wtxt-tall { font-family: "Liberation Mono", monospace; font-size: 14px; }
.wtxt-block { font-size: 9px; }
.wtxt-mid { font-size: 11px; }
.wtxt-co { font-size: 14px; }
.wtxt-name { font-size: 16px; }
.gtxt { fill: #1cf02a; font-family: "Liberation Mono", monospace; font-weight: 700; font-size: 8px; }
.gtxt-tall { font-size: 11px; }
.gtxt-cn { font-family: "Noto Sans CJK SC", sans-serif; font-size: 9px; }
.gtxt-note { font-family: "Noto Sans CJK SC", sans-serif; font-size: 10px; }

.dlg { position: absolute; left: 422px; top: 83px; width: 648px; height: 486px; padding: 0 6px 5px; display: flex; flex-direction: column; border: 1px solid #555; border-radius: 6px 6px 3px 3px; background: linear-gradient(#6f6f6f 0, #3a3a3a 28px, #9a9a9a 30px, #b4b4b4 139px, #1a1a1a 141px, #202020 470px, #6a7a70 100%); box-shadow: 0 0 2px #888; }
.dlg-title { flex: 0 0 27px; display: flex; align-items: flex-start; justify-content: space-between; margin: 0 -6px; padding: 5px 3px 0 5px; line-height: 17px; color: #111; background: linear-gradient(90deg, #9c9c9c 0, #8a8a8a 60px, #2a2a2a 150px, #050505 230px, #111 70%, #3a3a3a 100%); border-radius: 6px 6px 0 0; }
.dlg-close { flex: none; width: 48px; height: 20px; margin-top: -5px; text-align: center; font: 700 14px/17px "Liberation Sans", sans-serif; color: #fff; background: linear-gradient(#e8a090 0, #c95a48 35%, #a81c0c 50%, #c0392b 80%, #d98a7a 100%); border: 1px solid #5a2a22; border-top: 0; border-radius: 0 0 4px 4px; }
.dlg-body { flex: 1; min-height: 0; display: flex; flex-direction: column; padding: 7px 5px 7px 7px; background: #f0f0f0; border: 1px solid #555; }
.tabs { flex: 0 0 20px; display: flex; align-items: flex-end; }
.tab { display: block; height: 18px; padding: 0 4px; line-height: 17px; font-size: 12px; border-right: 1px solid #666; border-left: 1px solid #fff; background: #f0f0f0; color: #222; }
.tab-on { height: 21px; margin-bottom: -1px; padding: 0 5px; position: relative; z-index: 1; line-height: 15px; }
.panel { flex: 0 0 392px; display: flex; flex-direction: column; padding: 0 16px 0 6px; border-top: 1px solid #fff; border-left: 1px solid #fff; border-right: 2px solid #777; border-bottom: 2px solid #777; }
.radios { flex: 0 0 29px; display: flex; align-items: center; padding-bottom: 5px; }
.radio { display: flex; align-items: center; gap: 5px; font-size: 12px; line-height: 14px; }
.radio-a { margin-left: 99px; }
.radio-b { margin-left: 175px; }
.dot { flex: none; display: block; width: 11px; height: 11px; border-radius: 50%; border: 1px solid #888; background: #fff; position: relative; }
.dot-on::after { content: ""; position: absolute; left: 3px; top: 3px; width: 3px; height: 3px; border-radius: 50%; background: #111; }
.focus { outline: 1px dotted #222; }
.tol { flex: none; width: 599px; background: #8c8c8c; }
.tol-head { display: grid; grid-template-columns: repeat(22, 1fr); column-gap: 1px; height: 23px; padding: 2px; }
.tol-head span { background: #000; color: #fff; text-align: center; font: 700 13px/18px "Liberation Sans", sans-serif; }
.tol-body { display: grid; grid-template-columns: repeat(22, 1fr); grid-auto-rows: 21px; gap: 1px; padding: 0 2px 2px; }
.tol-body span { background: #000; color: #e8e8e8; text-align: center; font: 11px/21px "Liberation Sans", sans-serif; white-space: nowrap; }
.tol-body .b { background: #0a47ad; color: #f4f4f4; }
.tol-body .r { background: #f00; color: #f4f4f4; }
.dlg-foot { flex: 1; display: flex; align-items: flex-start; padding-top: 5px; }
.lbl { flex: none; line-height: 18px; padding-top: 2px; }
.lbl-a { width: 57px; }
.lbl-b { width: 36px; margin-left: 9px; }
.field { flex: none; width: 84px; height: 17px; margin-top: 4px; padding-left: 2px; background: #fff; border-top: 1px solid #888; border-left: 1px solid #888; font: 700 12px/15px "Liberation Mono", monospace; color: #141488; }
.legend { margin-left: auto; margin-right: 8px; margin-top: -1px; display: flex; flex-direction: column; }
.legend-row { display: flex; align-items: center; gap: 9px; height: 14px; line-height: 14px; }
.swatch { flex: none; display: block; width: 10px; height: 10px; }
.swatch-b { background: #00007f; }
.swatch-r { background: #f00; }
.dlg-btns { flex: none; display: flex; justify-content: flex-end; gap: 6px; margin-top: 6px; }
.push { flex: none; display: block; width: 75px; height: 21px; text-align: center; line-height: 19px; font-size: 12px; background: #f0f0f0; border: 1px solid; border-color: #fff #777 #777 #fff; box-shadow: 1px 1px 0 #999; }
.push-def { border-color: #555; box-shadow: inset -1px -1px 0 #888; }
.push-off { color: #999; }

.propbar { flex: 0 0 25px; display: flex; align-items: center; padding-top: 2px; border-top: 1px solid #999; }
.pl { flex: none; font-size: 12px; line-height: 18px; white-space: nowrap; }
.pl-1 { width: 16px; padding-left: 2px; }
.pl-2 { width: 19px; padding-left: 3px; }
.pl-3 { width: 18px; padding-left: 3px; }
.pl-4 { width: 64px; padding-left: 2px; }
.pl-5 { width: 50px; padding-left: 1px; }
.pl-6 { width: 61px; }
.pcombo { flex: none; display: flex; align-items: center; justify-content: space-between; height: 20px; padding-left: 3px; background: #fff; border: 1px solid #888; border-right-color: #ddd; border-bottom-color: #ddd; font-size: 12px; }
.pc-1 { width: 83px; }
.pc-2 { width: 70px; }
.pc-3 { width: 72px; }
.pc-arrow { flex: none; display: block; width: 16px; height: 18px; background: #e8e8e8; border: 1px solid; border-color: #fff #777 #777 #fff; position: relative; }
.pc-arrow::after { content: ""; position: absolute; left: 3px; top: 6px; border: 4px solid transparent; border-top: 5px solid #111; border-bottom: 0; }
.pinput { flex: none; height: 20px; padding-left: 1px; background: #fff; border: 1px solid #777; border-right-color: #ccc; border-bottom-color: #ccc; font-size: 11px; line-height: 16px; }
.pi-4 { width: 59px; }
.pi-6 { width: 60px; }
.pval { flex: none; width: 61px; padding-left: 2px; font-size: 11px; line-height: 18px; color: #444; }

.statusbar { flex: 0 0 10px; display: flex; align-items: flex-start; overflow: hidden; padding-top: 2px; }
.st-left { flex: none; padding-left: 2px; font-size: 12px; line-height: 14px; margin-right: auto; }
.st-box { flex: none; height: 16px; margin-left: 3px; padding-left: 2px; border-top: 1px solid #999; border-left: 1px solid #999; font-size: 13px; line-height: 15px; }
.st-a { width: 101px; }
.st-b { width: 265px; }
.st-c { width: 56px; margin-left: 4px; }
.st-d { width: 26px; margin-left: 5px; background: #fff; border: 1px solid #444; }

.xunlei { position: absolute; left: 1395px; top: 35px; width: 93px; height: 24px; display: flex; border-radius: 5px; overflow: hidden; background: linear-gradient(#eef4fb, #cfe0f4); box-shadow: 0 0 0 1px #a9bcd2, 1px 1px 2px #aaa; }
.xl-mark { flex: none; width: 24px; height: 24px; background: linear-gradient(135deg, #2a7fd0, #0b4aa8); }
.xl-text { flex: 1; text-align: center; font: italic 700 17px/24px "Noto Sans CJK SC", sans-serif; color: #2d5a8a; }

.netmeter { position: absolute; left: 1476px; top: 667px; width: 91px; height: 37px; display: flex; align-items: center; border-radius: 19px; background: linear-gradient(#eef2ea, #dfe5d8); }
.nm-dial { flex: none; width: 34px; height: 34px; margin-left: 1px; border-radius: 50%; text-align: center; font: 10px/30px "Liberation Sans", sans-serif; color: #3a5a2a; background: radial-gradient(circle at 50% 60%, #a8dc78, #7fc45a); border: 2px solid #3f7a4f; box-shadow: 0 0 0 1px #fff; }
.nm-rates { flex: 1; display: flex; flex-direction: column; align-items: flex-end; padding-right: 9px; font: 10px/16px "Liberation Sans", sans-serif; color: #333; }
.nm-line { display: block; }
.nm-up, .nm-down { font: 700 13px/16px "DejaVu Sans", sans-serif; margin-right: 2px; }
.nm-up { color: #d0702a; }
.nm-down { color: #2a8a3a; margin-right: 6px; }

.watermark { position: absolute; left: 689px; top: 808px; font: 700 20px/26px "Liberation Serif", serif; letter-spacing: .800px; color: #f08a8f; white-space: nowrap; }
```
